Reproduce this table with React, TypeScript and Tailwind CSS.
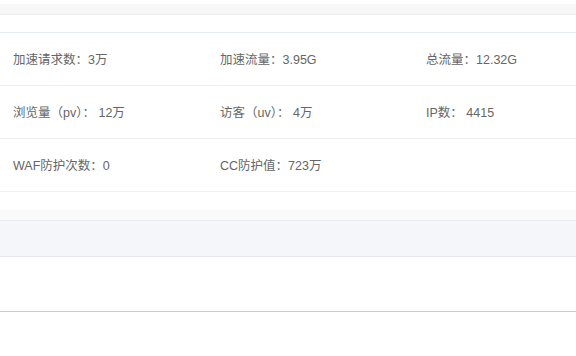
const stats = [
  ["加速请求数：3万", "加速流量：3.95G", "总流量：12.32G"],
  ["浏览量（pv）： 12万", "访客（uv）： 4万", "IP数： 4415"],
  ["WAF防护次数：0", "CC防护值：723万", ""],
];

export default function App() {
  return (
    <div
      className="w-[576px] h-[356px] overflow-hidden bg-white text-[12.5px] text-[#666]"
      style={{ fontFamily: '"Liberation Sans", "Noto Sans CJK SC", sans-serif' }}
    >
      <div className="h-[4px] bg-white" />
      <div className="h-[11px] bg-[#f7f7f7] border-b border-[#eeeeee]" />
      <div className="h-[18px] bg-white border-b border-[#e6ecf3]" />
      {stats.map((row, i) => (
        <div
          key={i}
          className="grid grid-cols-[207px_206px_1fr] h-[53px] items-center pl-[13px] pt-[3px] border-b border-[#eef0f4]"
        >
          {row.map((cell, j) => (
            <div key={j} className="whitespace-nowrap">
              {cell}
            </div>
          ))}
        </div>
      ))}
      <div className="h-[18px] bg-white" />
      <div className="h-[11px] bg-[#fafafa] border-b border-[#e8ebee]" />
      <div className="h-[36px] bg-[#f4f6fa] border-b border-[#e4e8ee]" />
      <div className="h-[55px] bg-white border-b border-[#cccccc]" />
    </div>
  );
}
